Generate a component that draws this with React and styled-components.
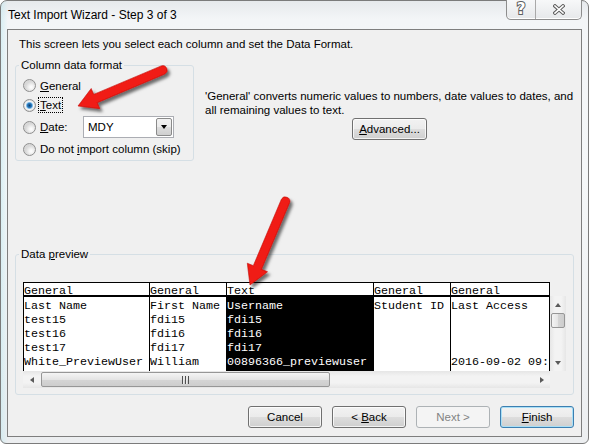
import styled, { createGlobalStyle, css } from 'styled-components';

const GlobalStyle = createGlobalStyle`
  * { box-sizing: border-box; }
  html, body { margin: 0; padding: 0; background: #ffffff; }
  body {
    font-family: "Liberation Sans", Arial, sans-serif;
    font-size: 11.5px;
    line-height: 14px;
    color: #000;
  }
`;

const Stage = styled.div`
  position: relative;
  width: 589px;
  height: 444px;
  overflow: hidden;
`;

const Window = styled.div`
  width: 100%;
  height: 100%;
  display: flex;
  flex-direction: column;
  padding: 0 6px 6px 6px;
  border: 1px solid #7b7b7b;
  border-radius: 7px 7px 6px 6px;
  background:
    linear-gradient(90deg, rgba(190, 232, 240, 0.5) 0, rgba(255, 255, 255, 0) 7px),
    linear-gradient(180deg, #e6e9ec 0, #f3f5f7 18px, #f5f7f8 40%, #eceef0 100%);
`;

const TitleBar = styled.div`
  height: 28px;
  display: flex;
  justify-content: space-between;
  align-items: flex-start;
`;

const Title = styled.div`
  padding: 7px 0 0 1px;
  font-size: 12px;
`;

const CaptionGroup = styled.div`
  display: flex;
  height: 20px;
  margin-top: -1px;
  border: 1px solid #8d8d8d;
  border-top: none;
  border-radius: 0 0 5px 5px;
  background: linear-gradient(#f7f8f9, #e6e8ea);
  box-shadow: inset 0 -1px 0 #ffffff;
  overflow: hidden;
`;

const CaptionButton = styled.div`
  width: ${(p) => p.$w}px;
  display: flex;
  align-items: center;
  justify-content: center;

  & + & {
    border-left: 1px solid #a9a9a9;
  }
`;

const HelpGlyph = styled.span`
  font-family: "DejaVu Sans", sans-serif;
  font-weight: bold;
  font-size: 15px;
  line-height: 1;
  color: #ffffff;
  -webkit-text-stroke: 2px #5f5f5f;
  paint-order: stroke fill;
`;

const Client = styled.div`
  flex: 1;
  display: flex;
  flex-direction: column;
  background: #f0f0f0;
  border: 1px solid #7e7e7e;
  padding: 7px 7px 8px 7px;
`;

const Intro = styled.p`
  margin: 0;
  padding-left: 4px;
`;

const TopSection = styled.div`
  display: flex;
  gap: 11px;
  margin-top: 7px;
`;

const GroupBox = styled.fieldset`
  margin: 0;
  min-width: 0;
  width: ${(p) => (p.$width ? `${p.$width}px` : 'auto')};
  border: 1px solid #d5dfe5;
  border-radius: 3px;
  padding: 5px 6px ${(p) => p.$bottom}px 7px;
`;

const Legend = styled.legend`
  padding: 0 2px;
  margin-left: -4px;
  line-height: 14px;
`;

const RadioList = styled.div`
  display: flex;
  flex-direction: column;
  gap: 2px;
`;

const RadioRow = styled.div`
  height: ${(p) => p.$h}px;
  display: flex;
  align-items: center;
  gap: 4px;
`;

const RadioCircle = styled.span`
  flex: none;
  width: 13px;
  height: 13px;
  border-radius: 50%;
  border: 1px solid #8f8f8f;
  background: ${(p) =>
    p.$checked
      ? 'radial-gradient(circle, #0f3f6c 0, #2d7cc0 2.2px, #9fd0f2 3.3px, #f7f7f7 4px, #dcdcdc 5.5px)'
      : 'radial-gradient(circle at 65% 65%, #ffffff 0, #f4f4f4 2px, #d8d8d8 5.5px)'};
`;

const RadioText = styled.span`
  flex: none;
  ${(p) => p.$w && css`width: ${p.$w}px;`}
  ${(p) =>
    p.$focus &&
    css`
      padding: 0 1px;
      margin-left: -1px;
      outline: 1px dotted #000;
    `}
`;

const Select = styled.div`
  width: 91px;
  height: 22px;
  display: flex;
  align-items: center;
  justify-content: space-between;
  padding: 0 1px 0 4px;
  background: #ffffff;
  border: 1px solid #abadb3;
`;

const DropButton = styled.span`
  width: 16px;
  height: 18px;
  display: flex;
  align-items: center;
  justify-content: center;
  border: 1px solid #8a8a8a;
  border-radius: 2px;
  background: linear-gradient(#f2f2f2 0, #ebebeb 50%, #dddddd 51%, #cfcfcf 100%);

  &::after {
    content: '';
    border-left: 3.5px solid transparent;
    border-right: 3.5px solid transparent;
    border-top: 4px solid #000;
  }
`;

const Description = styled.div`
  flex: 1;
  padding-top: 31px;
  display: flex;
  flex-direction: column;
  align-items: center;
`;

const DescText = styled.p`
  margin: 0 0 1px;
  align-self: stretch;
`;

const Button = styled.button`
  width: ${(p) => p.$w || 74}px;
  height: 22px;
  padding: 0;
  font: inherit;
  color: #000;
  border: 1px solid #707070;
  border-radius: 3px;
  background: linear-gradient(#f2f2f2 0, #ebebeb 50%, #dddddd 51%, #cfcfcf 100%);
  box-shadow: inset 0 0 0 1px rgba(255, 255, 255, 0.75);

  ${(p) =>
    p.$default &&
    css`
      border-color: #3c7fb1;
      box-shadow: inset 0 0 0 1px #a9dff6;
    `}

  &:disabled {
    color: #838383;
    border-color: #adb2b5;
    background: #f4f4f4;
    box-shadow: none;
  }
`;

const PreviewGroup = styled(GroupBox)`
  margin-top: auto;
`;

const PreviewBox = styled.div`
  margin-top: 16px;
  display: grid;
  grid-template-columns: 527px 16px;
  grid-template-rows: 89px 17px;
`;

const Table = styled.div`
  display: flex;
  overflow: hidden;
  background: #ffffff;
  border-right: 1px solid #000;
  font-family: "Liberation Mono", "Courier New", monospace;
  font-size: 11.67px;
`;

const Column = styled.div`
  flex: none;
  width: ${(p) => p.$w}px;
  display: flex;
  flex-direction: column;
  border-left: 1px solid #000;
  overflow: hidden;
`;

const HeaderCell = styled.div`
  height: 15px;
  padding-top: 2px;
  line-height: 12px;
  white-space: pre;
  overflow: hidden;
  background: #ffffff;
  border-top: 1px solid #000;
  border-bottom: 2px solid #000;
`;

const ColumnBody = styled.div`
  flex: 1;
  padding-top: 2px;
  background: ${(p) => (p.$selected ? '#000' : '#fff')};
  color: ${(p) => (p.$selected ? '#fff' : '#000')};
`;

const Cell = styled.div`
  height: 14px;
  line-height: 14px;
  white-space: pre;
  overflow: hidden;
`;

const ScrollV = styled.div`
  align-self: end;
  height: 75px;
  display: flex;
  flex-direction: column;
  background: linear-gradient(90deg, #e6e6e6, #f3f3f3 30%, #f3f3f3 70%, #e6e6e6);
`;

const ScrollH = styled.div`
  display: flex;
  background: linear-gradient(#e6e6e6, #f3f3f3 30%, #f3f3f3 70%, #e6e6e6);
`;

const ScrollArrow = styled.div`
  flex: none;
  width: ${(p) => (p.$vertical ? '16px' : '17px')};
  height: 17px;
  display: flex;
  align-items: center;
  justify-content: center;

  &::after {
    content: '';
    ${(p) =>
      p.$dir === 'up' &&
      css`
        border-left: 3.5px solid transparent;
        border-right: 3.5px solid transparent;
        border-bottom: 4px solid #5a5a5a;
      `}
    ${(p) =>
      p.$dir === 'down' &&
      css`
        border-left: 3.5px solid transparent;
        border-right: 3.5px solid transparent;
        border-top: 4px solid #5a5a5a;
      `}
    ${(p) =>
      p.$dir === 'left' &&
      css`
        border-top: 3.5px solid transparent;
        border-bottom: 3.5px solid transparent;
        border-right: 4px solid #5a5a5a;
      `}
    ${(p) =>
      p.$dir === 'right' &&
      css`
        border-top: 3.5px solid transparent;
        border-bottom: 3.5px solid transparent;
        border-left: 4px solid #5a5a5a;
      `}
  }
`;

const Track = styled.div`
  flex: 1;
  display: flex;
  flex-direction: ${(p) => (p.$vertical ? 'column' : 'row')};
`;

const Thumb = styled.div`
  display: flex;
  align-items: center;
  justify-content: center;
  border: 1px solid #969696;
  border-radius: 2px;
  ${(p) =>
    p.$vertical
      ? css`
          height: 15px;
          margin: 0 1px;
          background: linear-gradient(90deg, #f4f4f4, #e4e4e4 50%, #d5d5d5 51%, #cdcdcd);
        `
      : css`
          width: 289px;
          margin: 1px 0 1px 1px;
          background: linear-gradient(#f4f4f4, #e4e4e4 50%, #d5d5d5 51%, #cdcdcd);
        `}
`;

const Grip = styled.span`
  width: 7px;
  height: 8px;
  background: repeating-linear-gradient(90deg, #505050 0 1px, #eaeaea 1px 2px, transparent 2px 3px);
`;

const ButtonRow = styled.div`
  margin-top: 11px;
  display: flex;
  justify-content: flex-end;
  gap: 10px;
`;

const Overlay = styled.svg`
  position: absolute;
  left: 0;
  top: 0;
  pointer-events: none;
`;

const arrowPath = (tail, tip, shaft = 9, headLen = 19, headW = 22) => {
  const dx = tail[0] - tip[0];
  const dy = tail[1] - tip[1];
  const len = Math.hypot(dx, dy);
  const ux = dx / len;
  const uy = dy / len;
  const px = -uy;
  const py = ux;
  const bx = tip[0] + ux * headLen;
  const by = tip[1] + uy * headLen;
  const hs = shaft / 2;
  const hw = headW / 2;
  const p = (x, y) => `${x.toFixed(1)} ${y.toFixed(1)}`;
  return [
    `M${p(tip[0], tip[1])}`,
    `L${p(bx + px * hw, by + py * hw)}`,
    `L${p(bx + px * hs, by + py * hs)}`,
    `L${p(tail[0] + px * hs, tail[1] + py * hs)}`,
    `A${hs} ${hs} 0 0 0 ${p(tail[0] - px * hs, tail[1] - py * hs)}`,
    `L${p(bx - px * hs, by - py * hs)}`,
    `L${p(bx - px * hw, by - py * hw)}`,
    'Z',
  ].join(' ');
};

const columns = [
  { w: 126, type: 'General', rows: ['Last Name', 'test15', 'test16', 'test17', 'White_PreviewUser'] },
  { w: 77, type: 'General', rows: ['First Name', 'fdi15', 'fdi16', 'fdi17', 'William'] },
  { w: 147, type: 'Text', rows: ['Username', 'fdi15', 'fdi16', 'fdi17', '00896366_previewuser'], selected: true },
  { w: 77, type: 'General', rows: ['Student ID', '', '', '', ''] },
  { w: 99, type: 'General', rows: ['Last Access', '', '', '', '2016-09-02 09:'] },
];

const App = () => {
  return (
    <>
      <GlobalStyle />
      <Stage>
        <Window>
          <TitleBar>
            <Title>Text Import Wizard - Step 3 of 3</Title>
            <CaptionGroup>
              <CaptionButton $w={28}>
                <HelpGlyph>?</HelpGlyph>
              </CaptionButton>
              <CaptionButton $w={46}>
                <svg width="12" height="11" viewBox="0 0 12 11">
                  <path d="M2 2 L10 9 M10 2 L2 9" stroke="#5f5f5f" strokeWidth="3.6" strokeLinecap="square" />
                  <path d="M2 2 L10 9 M10 2 L2 9" stroke="#ffffff" strokeWidth="1.6" strokeLinecap="square" />
                </svg>
              </CaptionButton>
            </CaptionGroup>
          </TitleBar>

          <Client>
            <Intro>This screen lets you select each column and set the Data Format.</Intro>

            <TopSection>
              <GroupBox $width={179} $bottom={2}>
                <Legend>Column data format</Legend>
                <RadioList>
                  <RadioRow $h={17}>
                    <RadioCircle />
                    <RadioText>
                      <u>G</u>eneral
                    </RadioText>
                  </RadioRow>
                  <RadioRow $h={18}>
                    <RadioCircle $checked />
                    <RadioText $focus>
                      <u>T</u>ext
                    </RadioText>
                  </RadioRow>
                  <RadioRow $h={22}>
                    <RadioCircle />
                    <RadioText $w={39}>
                      <u>D</u>ate:
                    </RadioText>
                    <Select>
                      MDY
                      <DropButton />
                    </Select>
                  </RadioRow>
                  <RadioRow $h={18}>
                    <RadioCircle />
                    <RadioText>
                      Do not <u>i</u>mport column (skip)
                    </RadioText>
                  </RadioRow>
                </RadioList>
              </GroupBox>

              <Description>
                <DescText>
                  'General' converts numeric values to numbers, date values to dates, and
                  <br />
                  all remaining values to text.
                </DescText>
                <Button $w={75}>
                  <u>A</u>dvanced...
                </Button>
              </Description>
            </TopSection>

            <PreviewGroup $bottom={6}>
              <Legend>
                Data <u>p</u>review
              </Legend>
              <PreviewBox>
                <Table>
                  {columns.map((col, i) => (
                    <Column key={i} $w={col.w}>
                      <HeaderCell>{col.type}</HeaderCell>
                      <ColumnBody $selected={col.selected}>
                        {col.rows.map((r, j) => (
                          <Cell key={j}>{r}</Cell>
                        ))}
                      </ColumnBody>
                    </Column>
                  ))}
                </Table>
                <ScrollV>
                  <ScrollArrow $vertical $dir="up" />
                  <Track $vertical>
                    <Thumb $vertical />
                  </Track>
                  <ScrollArrow $vertical $dir="down" />
                </ScrollV>
                <ScrollH>
                  <ScrollArrow $dir="left" />
                  <Track>
                    <Thumb>
                      <Grip />
                    </Thumb>
                  </Track>
                  <ScrollArrow $dir="right" />
                </ScrollH>
              </PreviewBox>
            </PreviewGroup>

            <ButtonRow>
              <Button>Cancel</Button>
              <Button>
                &lt; <u>B</u>ack
              </Button>
              <Button disabled>Next &gt;</Button>
              <Button $default>
                <u>F</u>inish
              </Button>
            </ButtonRow>
          </Client>
        </Window>

        <Overlay width="589" height="444" viewBox="0 0 589 444">
          <defs>
            <filter id="arrowShadow" x="-20%" y="-20%" width="140%" height="140%">
              <feDropShadow dx="2.5" dy="3" stdDeviation="1.8" floodColor="#000" floodOpacity="0.55" />
            </filter>
          </defs>
          <g filter="url(#arrowShadow)" fill="#f01a12" stroke="#c20c08" strokeWidth="0.6">
            <path d={arrowPath([163, 70], [78, 106])} />
            <path d={arrowPath([285.5, 201], [250, 285])} />
          </g>
        </Overlay>
      </Stage>
    </>
  );
};

export default App;
